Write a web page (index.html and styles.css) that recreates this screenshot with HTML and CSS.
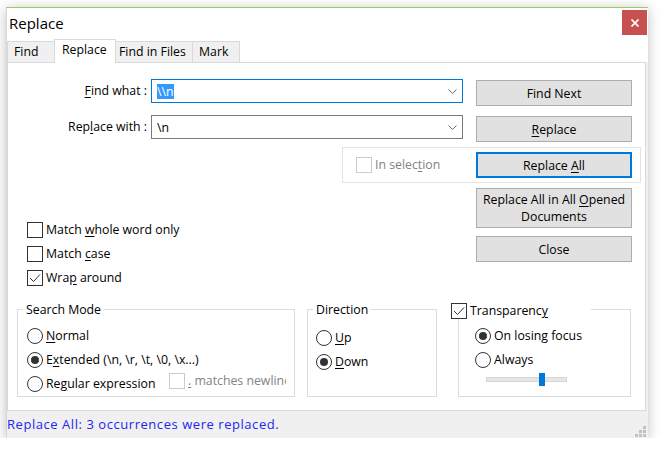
FILE: index.html
```html
<!DOCTYPE html>
<html>
<head>
<meta charset="utf-8">
<title>Replace</title>
<link rel="stylesheet" href="styles.css">
</head>
<body>
<div class="window">
  <div class="titlebar">
    <span class="title">Replace</span>
    <div class="close">
      <svg width="8" height="8" viewBox="0 0 8 8"><path d="M0.5 0.5 L7.5 7.5 M7.5 0.5 L0.5 7.5" stroke="#fff" stroke-width="1.7" fill="none"/></svg>
    </div>
  </div>
  <div class="tabs">
    <div class="tab t-find">Find</div>
    <div class="tab t-replace active">Replace</div>
    <div class="tab t-files">Find in Files</div>
    <div class="tab t-mark">Mark</div>
  </div>
  <div class="panel">
    <div class="field-row row-find">
      <div class="field-label"><u>F</u>ind what :</div>
      <div class="combo focused">
        <span class="sel">\\n</span>
        <svg class="chev" width="9" height="5" viewBox="0 0 9 5"><path d="M0.5 0.5 L4.5 4.5 L8.5 0.5" stroke="#6a6a6a" fill="none"/></svg>
      </div>
      <div class="btn"><span>Find Next</span></div>
    </div>
    <div class="field-row row-replace">
      <div class="field-label">Rep<u>l</u>ace with :</div>
      <div class="combo">
        <span class="val">\n</span>
        <svg class="chev" width="9" height="5" viewBox="0 0 9 5"><path d="M0.5 0.5 L4.5 4.5 L8.5 0.5" stroke="#6a6a6a" fill="none"/></svg>
      </div>
      <div class="btn"><span><u>R</u>eplace</span></div>
    </div>
    <div class="selbox">
      <div class="check disabled"><span class="box"></span><span class="lbl">In selec<u>t</u>ion</span></div>
      <div class="btn default"><span>Replace <u>A</u>ll</span></div>
    </div>
    <div class="mid">
      <div class="options">
        <div class="check"><span class="box"></span><span class="lbl">Match <u>w</u>hole word only</span></div>
        <div class="check"><span class="box"></span><span class="lbl">Match <u>c</u>ase</span></div>
        <div class="check"><span class="box on"><svg width="14" height="14" viewBox="0 0 14 14"><path d="M2 7 L5.5 10.5 L12 3.5" stroke="#333" stroke-width="1" fill="none"/></svg></span><span class="lbl">Wra<u>p</u> around</span></div>
      </div>
      <div class="side">
        <div class="btn tall"><span>Replace All in All <u>O</u>pened<br>Documents</span></div>
        <div class="btn"><span>Close</span></div>
      </div>
    </div>
    <div class="groups">
      <div class="group g-search">
        <div class="group-title">Search Mode</div>
        <div class="radios">
          <div class="radio-item"><span class="radio"></span><span class="lbl"><u>N</u>ormal</span></div>
          <div class="radio-item"><span class="radio on"></span><span class="lbl">E<u>x</u>tended (\n, \r, \t, \0, \x...)</span></div>
          <div class="radio-item regex">
            <div class="regex-main"><span class="radio"></span><span class="lbl">Re<u>g</u>ular expression</span></div>
            <div class="check disabled newline"><span class="box"></span><span class="lbl clip"><u>.</u> matches newline</span></div>
          </div>
        </div>
      </div>
      <div class="group g-dir">
        <div class="group-title">Direction</div>
        <div class="radios dir-radios">
          <div class="radio-item"><span class="radio"></span><span class="lbl"><u>U</u>p</span></div>
          <div class="radio-item"><span class="radio on"></span><span class="lbl"><u>D</u>own</span></div>
        </div>
      </div>
      <div class="group g-trans">
        <div class="group-title trans-title">
          <span class="box on"><svg width="14" height="14" viewBox="0 0 14 14"><path d="M2 7 L5.5 10.5 L12 3.5" stroke="#333" stroke-width="1" fill="none"/></svg></span>
          <span class="lbl">Transparenc<u>y</u></span>
        </div>
        <div class="radios trans-radios">
          <div class="radio-item"><span class="radio on"></span><span class="lbl">On losing focus</span></div>
          <div class="radio-item"><span class="radio"></span><span class="lbl">Always</span></div>
        </div>
        <div class="slider"><div class="thumb"></div></div>
      </div>
    </div>
  </div>
  <div class="status">
    <span class="status-text">Replace All: 3 occurrences were replaced.</span>
    <svg class="grip" width="11" height="11" viewBox="0 0 11 11" fill="#c2c2c2">
      <rect x="8" y="0" width="3" height="3"/>
      <rect x="4" y="4" width="3" height="3"/>
      <rect x="8" y="4" width="3" height="3"/>
      <rect x="0" y="8" width="3" height="3"/>
      <rect x="4" y="8" width="3" height="3"/>
      <rect x="8" y="8" width="3" height="3"/>
    </svg>
  </div>
</div>
</body>
</html>
```

FILE: styles.css
```css
html, body {
  margin: 0;
  padding: 0;
  background: #ffffff;
}

body {
  font-family: "Open Sans", "Noto Sans", sans-serif;
  font-size: 12.3px;
  color: #000;
  padding-top: 7px;
  padding-left: 6px;
}

u {
  text-decoration: underline;
  text-underline-offset: 2px;
}

.window {
  width: 642px;
  height: 431px;
  box-sizing: border-box;
  border-top: 1px solid #9ccd62;
  border-left: 1px solid #d8d8d8;
  background: #f0f0f0;
  display: flex;
  flex-direction: column;
  box-shadow: 0 2px 12px rgba(0, 0, 0, 0.25);
}

/* title bar */
.titlebar {
  height: 31px;
  flex: none;
  background: #fff;
  display: flex;
  align-items: flex-start;
}

.title {
  font-size: 15px;
  line-height: 20px;
  padding: 5px 0 0 2px;
}

.close {
  margin: 2px 1px 0 auto;
  width: 25px;
  height: 25px;
  background: #c75050;
  display: flex;
  align-items: center;
  justify-content: center;
}

/* tabs */
.tabs {
  height: 23px;
  flex: none;
  background: #fff;
  display: flex;
  align-items: flex-end;
}

.tab {
  height: 21px;
  box-sizing: border-box;
  border: 1px solid #d9d9d9;
  border-bottom: 0;
  background: #f0f0f0;
  margin-left: -1px;
  line-height: 20px;
  white-space: nowrap;
}

.t-find { margin-left: 0; width: 48px; padding-left: 6px; }
.t-replace { width: 62px; padding-left: 7px; }
.t-files { width: 78px; padding-left: 3px; }
.t-mark { width: 48px; padding-left: 6px; }

.tab.active {
  height: 24px;
  margin-bottom: -1px;
  background: #fff;
  position: relative;
  z-index: 1;
}

/* panel */
.panel {
  flex: none;
  height: 349px;
  box-sizing: border-box;
  margin-right: 2px;
  background: #fff;
  border: 1px solid #d9d9d9;
  display: flex;
  flex-direction: column;
}

.field-row {
  display: flex;
  align-items: flex-start;
}

.row-find { margin-top: 16px; }
.row-replace { margin-top: 9px; }

.field-label {
  width: 139px;
  text-align: right;
  line-height: 24px;
  white-space: nowrap;
}

.combo {
  margin-left: 4px;
  width: 312px;
  height: 24px;
  box-sizing: border-box;
  border: 1px solid #7a7a7a;
  display: flex;
  align-items: center;
  padding: 0 5px;
  background: #fff;
}

.combo.focused { border-color: #0078d7; }

.sel {
  background: #3399ff;
  color: #fff;
  line-height: 15px;
}

.chev { margin-left: auto; flex: none; }

.btn {
  width: 156px;
  height: 26px;
  box-sizing: border-box;
  border: 1px solid #adadad;
  background: #e1e1e1;
  display: flex;
  align-items: center;
  justify-content: center;
  text-align: center;
  line-height: 15px;
  white-space: nowrap;
}

.field-row .btn {
  margin-left: 13px;
  margin-top: 1px;
}

.btn.default { border: 2px solid #0078d7; }
.btn.tall { height: 40px; line-height: 17px; }

.selbox {
  margin: 5px 0 0 334px;
  width: 299px;
  height: 36px;
  box-sizing: border-box;
  border: 1px solid #e3e3e3;
  padding: 4px 8px 4px 13px;
  display: flex;
  align-items: center;
  justify-content: space-between;
}

/* checkboxes */
.check {
  display: flex;
  align-items: center;
  height: 16px;
  white-space: nowrap;
}

.box {
  width: 16px;
  height: 16px;
  box-sizing: border-box;
  border: 1px solid #333;
  background: #fff;
  flex: none;
  display: flex;
  align-items: center;
  justify-content: center;
}

.check .lbl { margin-left: 3px; line-height: 16px; }

.check.disabled .box { border-color: #cccccc; }
.check.disabled .lbl { color: #838383; }

.mid { display: flex; }

.options {
  margin: 39px 0 0 19px;
  display: flex;
  flex-direction: column;
  gap: 8px;
}

.side {
  margin: 5px 13px 0 auto;
  display: flex;
  flex-direction: column;
  gap: 8px;
}

/* groups */
.groups {
  display: flex;
  align-items: flex-start;
  margin: 23px 0 0 9px;
}

.group {
  border: 1px solid #dcdcdc;
  height: 88px;
  box-sizing: border-box;
  display: flex;
  flex-direction: column;
  align-items: flex-start;
}

.g-search { width: 278px; }
.g-dir { width: 130px; margin-left: 12px; }
.g-trans { width: 173px; margin-left: 21px; }

.group-title {
  margin: -8px 0 0 5px;
  padding: 0 3px;
  background: #fff;
  line-height: 16px;
  height: 16px;
  white-space: nowrap;
}

.trans-title {
  margin: -7px 0 0 -8px;
  padding: 0;
  width: 140px;
  display: flex;
  align-items: center;
}

.trans-title .lbl { margin-left: 3px; }

.radios {
  margin: 10px 0 0 9px;
  display: flex;
  flex-direction: column;
  gap: 8px;
}

.dir-radios { margin: 12px 0 0 8px; }
.trans-radios { margin: 9px 0 0 16px; }

.radio-item {
  display: flex;
  align-items: center;
  height: 16px;
  white-space: nowrap;
}

.radio-item .lbl { margin-left: 3px; line-height: 16px; }

.radio {
  width: 16px;
  height: 16px;
  box-sizing: border-box;
  border: 1px solid #333;
  border-radius: 50%;
  background: #fff;
  flex: none;
  display: flex;
  align-items: center;
  justify-content: center;
}

.radio.on::after {
  content: "";
  width: 8px;
  height: 8px;
  border-radius: 50%;
  background: #333;
}

.regex { align-items: flex-start; }

.regex-main {
  display: flex;
  align-items: center;
  width: 142px;
  height: 16px;
}

.regex-main .lbl { margin-left: 3px; line-height: 16px; }

.newline { margin-top: -3px; }

.clip {
  width: 98px;
  overflow: hidden;
}

.slider {
  margin: 9px 0 0 27px;
  width: 81px;
  height: 5px;
  box-sizing: border-box;
  background: #e7e7e7;
  border: 1px solid #d6d6d6;
  position: relative;
}

.thumb {
  position: absolute;
  left: 52px;
  top: -5px;
  width: 6px;
  height: 13px;
  background: #0078d7;
}

/* status bar */
.status {
  flex: 1;
  display: flex;
  align-items: flex-start;
}

.status-text {
  font-size: 13px;
  line-height: 26px;
  color: #2424f5;
  letter-spacing: 0.55px;
  white-space: nowrap;
}

.grip {
  margin: 0 2px 1px auto;
  align-self: flex-end;
  flex: none;
}
```
